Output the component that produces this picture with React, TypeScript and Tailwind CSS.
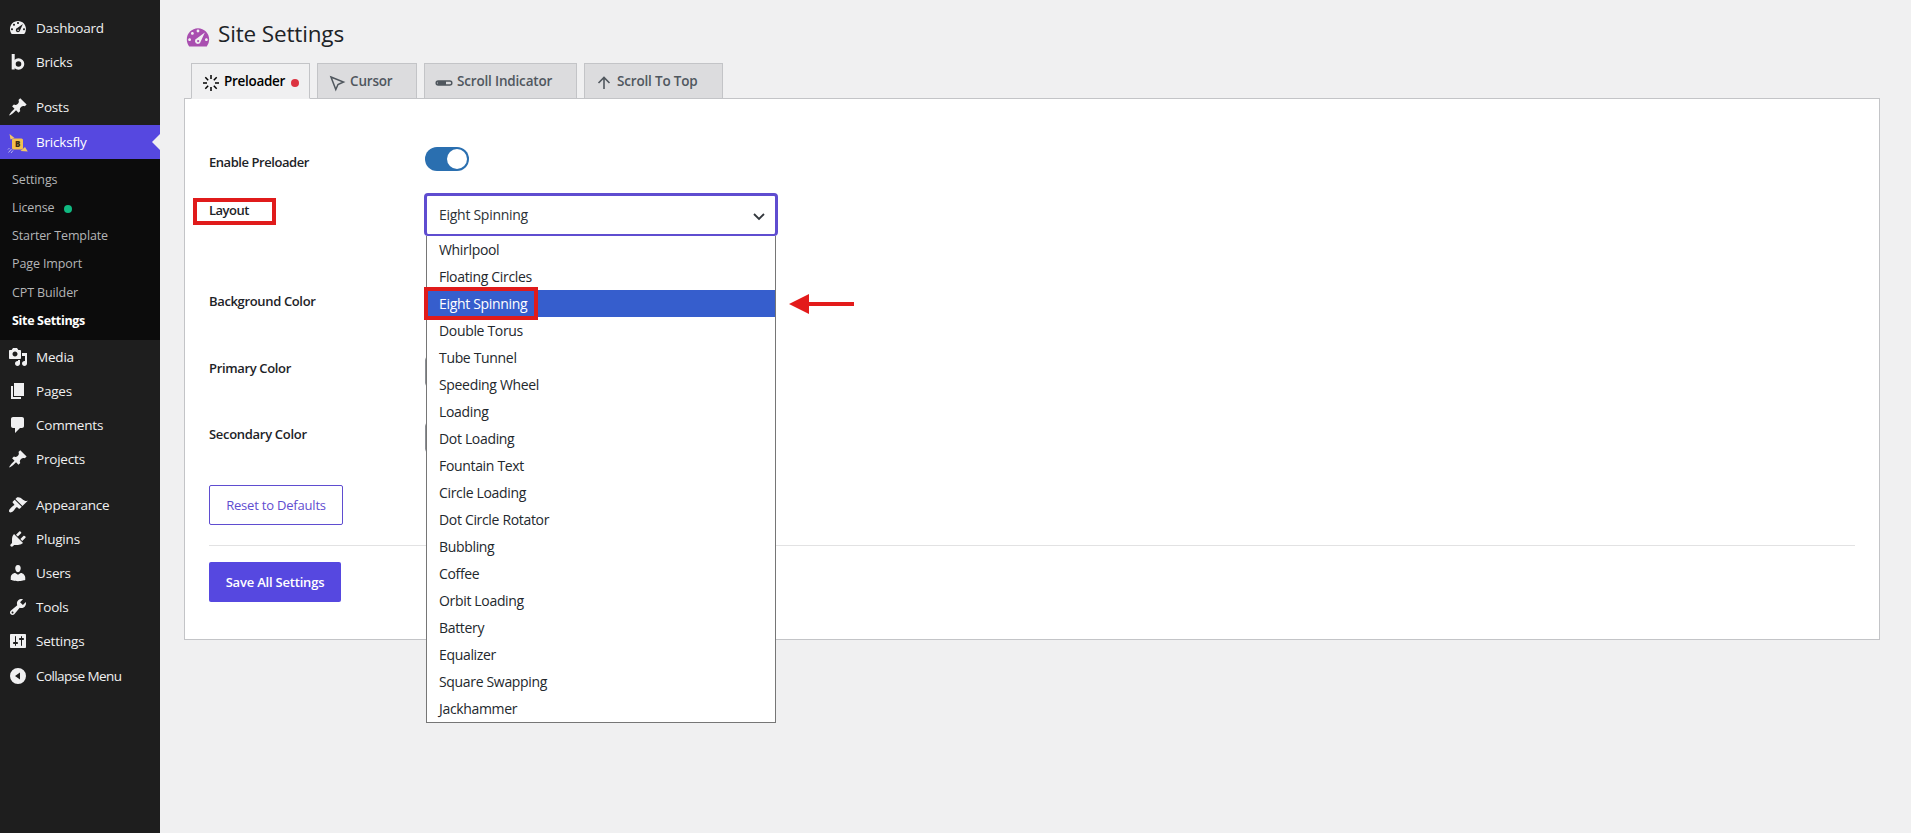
import React from 'react';
import clsx from 'clsx';

type MenuItem = { label: string; icon: React.ReactNode };

const Glyph = ({ d, className = 'w-5 h-5' }: { d: string; className?: string }) => (
  <svg viewBox="0 0 20 20" fill="currentColor" fillRule="evenodd" className={clsx('shrink-0', className)}>
    <path d={d} />
  </svg>
);

const gauge =
  'M3.76 16h12.48A7.98 7.98 0 0 0 18 11c0-4.42-3.58-8-8-8s-8 3.58-8 8c0 1.89.66 3.63 1.76 5zM10 4c.55 0 1 .45 1 1s-.45 1-1 1-1-.45-1-1 .45-1 1-1zM6 5.700c.55 0 1 .45 1 1s-.45 1-1 1-1-.45-1-1 .45-1 1-1zM4 10.200c.55 0 1 .45 1 1s-.45 1-1 1-1-.45-1-1 .45-1 1-1zm12 0c.55 0 1 .45 1 1s-.45 1-1 1-1-.45-1-1 .45-1 1-1zM14.900 6l-2.900 6.400a2.100 2.100 0 1 1-2.700-2.300zM10.100 11.400a.8.8 0 1 0 0 1.600.8.8 0 0 0 0-1.600z';
const pin =
  'M10.44 3.02l1.82-1.82 6.36 6.35-1.83 1.82c-1.05-.68-2.48-.57-3.41.36l-.75.75c-.92.93-1.04 2.35-.35 3.41l-1.83 1.82-2.41-2.41-2.8 2.79c-.42.42-3.38 2.71-3.8 2.29s1.86-3.39 2.28-3.81l2.79-2.79L4.1 9.36l1.83-1.82c1.05.69 2.48.57 3.4-.36l.75-.75c.93-.92 1.05-2.35.36-3.41z';
const media =
  'M13 11V4c0-.55-.45-1-1-1h-1.67L9 1H5L3.67 3H2c-.55 0-1 .45-1 1v7c0 .55.45 1 1 1h10c.55 0 1-.45 1-1zM7 4.5c1.38 0 2.5 1.12 2.5 2.5S8.38 9.5 7 9.5 4.5 8.38 4.5 7 5.62 4.5 7 4.5zM14 6h5v10.5c0 1.38-1.12 2.5-2.5 2.5S14 17.88 14 16.5s1.12-2.5 2.5-2.5c.17 0 .34.02.5.05V9h-3V6zm-4 8.05V13h2v3.5c0 1.38-1.12 2.5-2.5 2.5S7 17.88 7 16.5 8.12 14 9.5 14c.17 0 .34.02.5.05z';
const pages = 'M6 15V2h10v13H6zm-1 1h8v2H3V5h2v11z';
const comments =
  'M5 2h9c1.1 0 2 .9 2 2v7c0 1.1-.9 2-2 2h-2l-5 5v-5H5c-1.1 0-2-.9-2-2V4c0-1.1.9-2 2-2z';
const brush =
  'M14.48 11.06L7.41 3.99l1.5-1.5c.5-.56 2.3-.47 3.51.32 1.21.8 1.43 1.28 2.91 2.1 1.18.64 2.45 1.26 4.45.85zm-.71.71L6.7 4.7 4.93 6.47c-.39.39-.39 1.02 0 1.41l1.06 1.06c.39.39.39 1.03 0 1.42-.6.6-1.43 1.11-2.21 1.69-.35.26-.7.53-1.01.84C1.43 14.23.4 16.08 1.4 17.07c.99 1 2.84-.03 4.18-1.36.31-.31.58-.66.85-1.02.57-.78 1.08-1.61 1.69-2.21.39-.39 1.02-.39 1.41 0l1.06 1.06c.39.39 1.02.39 1.41 0z';
const plug =
  'M13.11 4.36L9.87 7.6 8 5.73l3.24-3.24c.35-.34 1.05-.2 1.56.32.52.51.66 1.21.31 1.55zm-8 1.77l.91-1.12 9.01 9.01-1.19.84c-.71.71-2.63 1.16-3.82 1.16H6.14L4.9 17.26c-.59.59-1.54.59-2.12 0-.59-.58-.59-1.53 0-2.12l1.24-1.24v-3.88c0-1.13.4-3.19 1.09-3.89zm7.26 3.97l3.24-3.24c.34-.35 1.04-.21 1.55.31.52.51.66 1.21.31 1.55l-3.24 3.25z';
const user =
  'M10 9.25c-2.27 0-2.73-3.44-2.73-3.44C7 4.02 7.82 2 9.97 2c2.16 0 2.98 2.02 2.71 3.81 0 0-.41 3.44-2.68 3.44zm0 2.57L12.72 10c2.39 0 4.52 2.33 4.52 4.53v2.49s-3.65 1.13-7.24 1.13c-3.65 0-7.24-1.13-7.24-1.13v-2.49c0-2.25 1.94-4.48 4.47-4.48z';
const wrench =
  'M16.68 9.77c-1.34 1.34-3.3 1.67-4.95.99l-5.41 6.52c-.99.99-2.59.99-3.58 0s-.99-2.59 0-3.57l6.52-5.42c-.68-1.65-.35-3.61.99-4.95 1.28-1.28 3.12-1.62 4.72-1.06l-2.89 2.89 2.82 2.82 2.86-2.87c.53 1.58.18 3.39-1.08 4.65zM3.81 16.21c.4.39 1.04.39 1.43 0 .4-.4.4-1.04 0-1.43-.39-.4-1.03-.4-1.43 0-.39.39-.39 1.03 0 1.43z';
const sliders =
  'M18 16V4c0-.55-.45-1-1-1H3c-.55 0-1 .45-1 1v12c0 .55.45 1 1 1h14c.55 0 1-.45 1-1zM8 11h1c.55 0 1 .45 1 1s-.45 1-1 1H8v1.5c0 .28-.22.5-.5.5s-.5-.22-.5-.5V13H6c-.55 0-1-.45-1-1s.45-1 1-1h1V5.500c0-.28.22-.5.5-.5s.5.22.5.5V11zm5-2h-1c-.55 0-1-.45-1-1s.45-1 1-1h1V5.500c0-.28.22-.5.5-.5s.5.22.5.5V7h1c.55 0 1 .45 1 1s-.45 1-1 1h-1v5.500c0 .28-.22.5-.5.5s-.5-.22-.5-.5V9z';
const collapse = 'M10 2a8 8 0 1 0 0 16 8 8 0 0 0 0-16zM12 6.500v7L7 10z';

const BricksIcon = () => (
  <svg viewBox="0 0 20 20" fill="none" stroke="currentColor" strokeWidth="3" className="w-5 h-5 shrink-0">
    <path d="M5.200 2v15.500" />
    <circle cx="10.500" cy="12" r="4.300" />
  </svg>
);

const BricksflyIcon = () => (
  <svg viewBox="0 0 20 20" className="w-5 h-5 shrink-0 translate-y-0.5 overflow-visible">
    <path d="M1.500 0l1 5.500 4-1.500zM19.800 17.500l-7.300-.5 4.500-4z" fill="#f3c765" />
    <rect x="4" y="4.500" width="11" height="11" rx="1.500" fill="#f3c04e" />
    <text x="9.500" y="13" textAnchor="middle" fontSize="8" fontWeight="800" fill="#3b2c14">B</text>
    <path d="M.5 18.500l3-3.500M3 19l2-2.500M0 15.500L1.500 14" stroke="#b9b4ee" />
  </svg>
);

const topItems: MenuItem[] = [
  { label: 'Dashboard', icon: <Glyph d={gauge} /> },
  { label: 'Bricks', icon: <BricksIcon /> },
];

const contentItems: MenuItem[] = [
  { label: 'Media', icon: <Glyph d={media} /> },
  { label: 'Pages', icon: <Glyph d={pages} /> },
  { label: 'Comments', icon: <Glyph d={comments} /> },
  { label: 'Projects', icon: <Glyph d={pin} /> },
];

const adminItems: MenuItem[] = [
  { label: 'Appearance', icon: <Glyph d={brush} /> },
  { label: 'Plugins', icon: <Glyph d={plug} /> },
  { label: 'Users', icon: <Glyph d={user} /> },
  { label: 'Tools', icon: <Glyph d={wrench} /> },
  { label: 'Settings', icon: <Glyph d={sliders} /> },
];

const subItems = ['Settings', 'License', 'Starter Template', 'Page Import', 'CPT Builder', 'Site Settings'];

const layouts = [
  'Whirlpool', 'Floating Circles', 'Eight Spinning', 'Double Torus', 'Tube Tunnel', 'Speeding Wheel',
  'Loading', 'Dot Loading', 'Fountain Text', 'Circle Loading', 'Dot Circle Rotator', 'Bubbling',
  'Coffee', 'Orbit Loading', 'Battery', 'Equalizer', 'Square Swapping', 'Jackhammer',
];

const MenuRow = ({ item, className = 'tracking-[-0.2px]' }: { item: MenuItem; className?: string }) => (
  <li className={clsx('h-[34px] flex items-center gap-2 pl-2', className)}>
    {item.icon}
    <span className="pt-0.5 text-[13.5px] font-medium leading-none">{item.label}</span>
  </li>
);

const Sidebar = () => (
  <aside className="w-40 shrink-0 bg-[#1e1e1e] text-[#f0f0f1] pt-[11px]">
    <ul>
      {topItems.map((item) => <MenuRow key={item.label} item={item} />)}
    </ul>
    <ul className="mt-[11px]">
      <MenuRow item={{ label: 'Posts', icon: <Glyph d={pin} /> }} />
    </ul>
    <div className="relative mt-px bg-[#5648e0] text-white">
      <ul><MenuRow item={{ label: 'Bricksfly', icon: <BricksflyIcon /> }} /></ul>
      <span className="absolute right-0 top-[9px] border-y-8 border-y-transparent border-r-8 border-r-[#f0f0f1]" />
    </div>
    <ul className="h-[181px] bg-[#0c0c0c] pt-[7px] pl-3 text-[12.5px] tracking-[-0.12px] text-[#b4b5b7]">
      {subItems.map((label) => (
        <li
          key={label}
          className={clsx('h-[28.200px] flex items-center leading-none', label === 'Site Settings' && 'font-bold text-white tracking-[-0.33px]')}
        >
          {label}
          {label === 'License' && <span className="ml-[9px] mt-px w-2 h-2 rounded-full bg-[#10b981]" />}
        </li>
      ))}
    </ul>
    <ul>
      {contentItems.map((item) => <MenuRow key={item.label} item={item} />)}
    </ul>
    <ul className="mt-3">
      {adminItems.map((item) => <MenuRow key={item.label} item={item} />)}
      <MenuRow className="mt-px tracking-[-0.58px]" item={{ label: 'Collapse Menu', icon: <Glyph d={collapse} /> }} />
    </ul>
  </aside>
);

const Tab = ({ label, icon, active, className }: { label: string; icon: React.ReactNode; active?: boolean; className: string }) => (
  <div
    className={clsx(
      'h-[36px] border border-[#c3c4c7] flex items-center pl-2.5 text-[13.5px] font-semibold',
      active ? 'bg-[#f0f0f1] border-b-[#f0f0f1] text-black tracking-[-0.3px] relative' : 'bg-[#dcdcde] text-[#50575e] tracking-[-0.18px]',
      className,
    )}
  >
    {icon}
    <span className="ml-1 pt-0.5 leading-none whitespace-nowrap">{label}</span>
    {active && <span className="ml-1.5 mt-[3px] w-2 h-2 rounded-full bg-[#dc3340]" />}
  </div>
);

const Label = ({ children, className }: { children: React.ReactNode; className?: string }) => (
  <div className={clsx('text-[13px] font-semibold leading-5 text-[#1d2327]', className)}>{children}</div>
);

const LayoutSelect = () => (
  <div className="relative w-[354px] h-[43px] -ml-px -mt-px">
    <div className="h-[43px] border-[3px] border-b-2 border-[#5f4dd0] rounded flex items-center justify-between pl-3 pr-2.5 text-[14px] text-[#2c3338]">
      <span className="tracking-[-0.28px] pb-px">Eight Spinning</span>
      <svg viewBox="0 0 12 8" fill="none" stroke="#32373c" strokeWidth="1.800" className="w-3 h-2 mt-[3px]">
        <path d="M1 1l5 5 5-5" />
      </svg>
    </div>
    <ul className="absolute left-0.5 top-[43px] z-10 w-[350px] bg-white border border-t-0 border-[#767676] text-[14px] text-[#23282d]">
      {layouts.map((name) => (
        <li
          key={name}
          className={clsx('relative h-[27px] flex items-center pl-3 tracking-[-0.33px]', name === 'Eight Spinning' && 'bg-[#365ecd] text-white')}
        >
          {name}
          {name === 'Eight Spinning' && (
            <span className="absolute -left-[3px] -top-[3px] w-[114px] h-[33px] border-4 border-[#e01b1b]" />
          )}
        </li>
      ))}
    </ul>
    <svg viewBox="0 0 65 20" fill="#e31b1b" className="absolute left-[365px] top-[101px] w-[65px] h-5">
      <path d="M0 10L20 0v8h45v4H20v8z" />
    </svg>
  </div>
);

const App: React.FC = () => (
  <div className="flex w-[1911px] h-[833px] overflow-hidden bg-[#f0f0f1] font-['Open_Sans','Noto_Sans',sans-serif]">
    <Sidebar />
    <main className="grow pl-6 pr-[31px]">
      <header className="flex items-center h-[63px] pb-[7px] pt-4">
        <Glyph d={gauge} className="w-7 h-7 text-[#a94fb0] mt-[3px]" />
        <h1 className="ml-1.5 text-[22.500px] leading-none text-[#1d2327] tracking-[-0.15px] -mt-1">Site Settings</h1>
      </header>

      <nav className="flex gap-[7px] pl-[7px] -mb-px">
        <Tab
          label="Preloader"
          active
          className="w-[119px]"
          icon={
            <svg viewBox="0 0 18 18" stroke="currentColor" strokeWidth="1.500" className="w-[18px] h-[18px] mt-[3px]">
              <path d="M9 1v4M9 13v4M1 9h4M13 9h4M3.300 3.300l2.900 2.900M11.800 11.800l2.900 2.900M3.300 14.700l2.900-2.900M11.800 6.200l2.900-2.900" />
            </svg>
          }
        />
        <Tab
          label="Cursor"
          className="w-[100px]"
          icon={
            <svg viewBox="0 0 18 18" fill="none" stroke="currentColor" strokeWidth="1.500" className="w-[18px] h-[18px] mt-[3px]">
              <path d="M3 3l12.500 5-5.500 2.500L7.800 15.500z" />
            </svg>
          }
        />
        <Tab
          label="Scroll Indicator"
          className="w-[153px]"
          icon={
            <svg viewBox="0 0 18 18" fill="none" stroke="currentColor" className="w-[18px] h-[18px] mt-[3px]">
              <rect x="1.200" y="7" width="15.600" height="4" rx="2" strokeWidth="1.500" />
              <path d="M2.500 9h8.500" strokeWidth="4" />
            </svg>
          }
        />
        <Tab
          label="Scroll To Top"
          className="w-[139px]"
          icon={
            <svg viewBox="0 0 18 18" fill="none" stroke="currentColor" strokeWidth="1.600" className="w-[18px] h-[18px] mt-[3px]">
              <path d="M9 15V4M3.500 9L9 3.500 14.500 9" />
            </svg>
          }
        />
      </nav>

      <section className="h-[542px] bg-white border border-[#c3c4c7] px-6">
        <div className="grid grid-cols-[216px_1fr] pt-[48px]">
          <Label className="h-[47px] pt-[5px] tracking-[-0.45px]">Enable Preloader</Label>
          <div className="w-11 h-6 rounded-full bg-[#2a6fb0] flex justify-end items-center p-0.5">
            <span className="w-5 h-5 rounded-full bg-white" />
          </div>
          <Label className="relative h-[90px] pt-[6px] tracking-[-0.5px]">
            Layout
            <span className="absolute -left-4 top-1 w-[83px] h-[27px] border-4 border-[#e01b1b]" />
          </Label>
          <LayoutSelect />
          <Label className="h-[67px] pt-[7px] tracking-[-0.35px]">Background Color</Label>
          <div />
          <Label className="h-[66px] pt-[7px] tracking-[-0.35px]">Primary Color</Label>
          <div className="h-[31px] w-20 mt-[5px] border border-[#8c8f94] rounded" />
          <Label className="h-[68px] pt-[7px] tracking-[-0.3px]">Secondary Color</Label>
          <div className="h-[31px] w-20 mt-[5px] border border-[#8c8f94] rounded" />
        </div>
        <button className="block w-[134px] h-10 pt-0.5 border border-[#5f4dd0] rounded-[2px] text-[#5f4dd0] text-[13px] font-medium tracking-[-0.2px]">
          Reset to Defaults
        </button>
        <hr className="mt-5 border-[#e2e2e3]" />
        <button className="block mt-4 w-[132px] h-10 pt-px rounded-[2px] bg-[#5648e0] text-white text-[13px] font-semibold tracking-[-0.2px]">
          Save All Settings
        </button>
      </section>
    </main>
  </div>
);

export default App;
